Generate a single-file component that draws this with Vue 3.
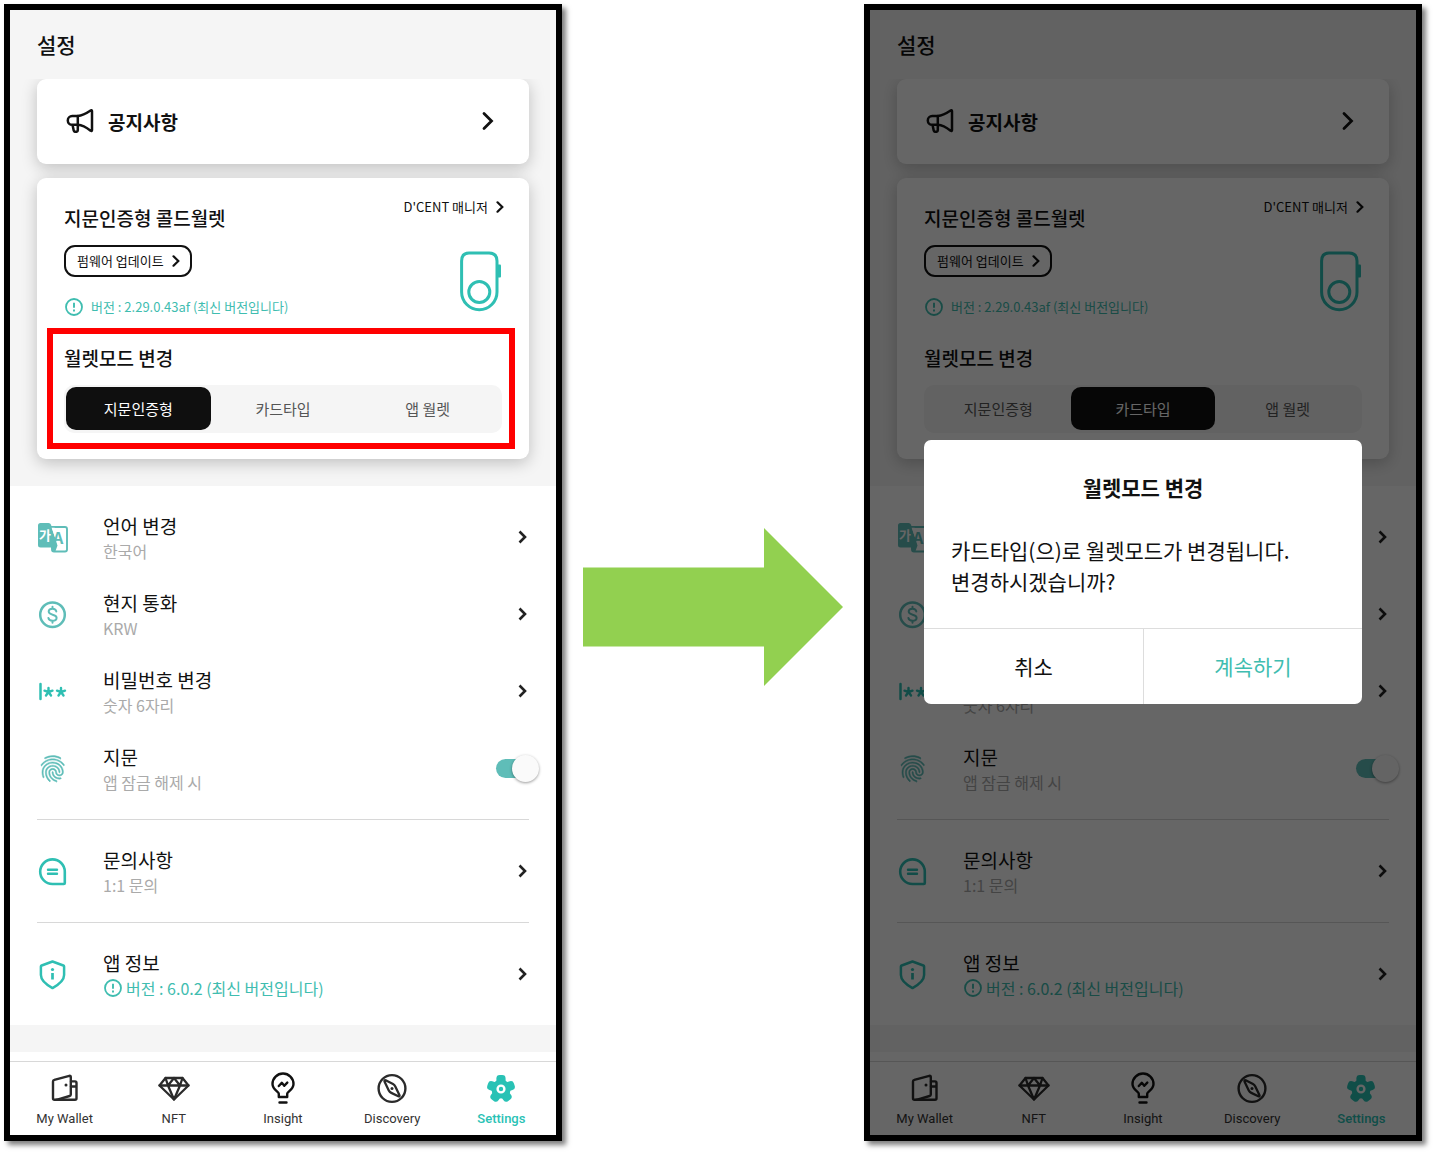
<script setup>
const phones = [
  { id: 'before', mode: 'finger', highlight: true, dialog: false },
  { id: 'after', mode: 'card', highlight: false, dialog: true },
]

const modes = [
  { id: 'finger', label: '지문인증형' },
  { id: 'card', label: '카드타입' },
  { id: 'app', label: '앱 월렛' },
]

const groups = [
  [
    { icon: 'language', title: '언어 변경', sub: '한국어' },
    { icon: 'currency', title: '현지 통화', sub: 'KRW' },
    { icon: 'password', title: '비밀번호 변경', sub: '숫자 6자리' },
    { icon: 'finger', title: '지문', sub: '앱 잠금 해제 시', toggle: true },
  ],
  [{ icon: 'chat', title: '문의사항', sub: '1:1 문의' }],
  [{ icon: 'shield', title: '앱 정보', sub: '버전 : 6.0.2 (최신 버전입니다)', version: true }],
]

const tabs = [
  { id: 'wallet', label: 'My Wallet' },
  { id: 'nft', label: 'NFT' },
  { id: 'insight', label: 'Insight' },
  { id: 'discovery', label: 'Discovery' },
  { id: 'settings', label: 'Settings' },
]

const gearTeeth = [0, 72, 144, 216, 288]

const fingerprint =
  'M17.81 4.47c-.08 0-.16-.02-.23-.06C15.66 3.42 14 3 12.01 3c-1.98 0-3.86.47-5.57 1.41-.24.13-.54.04-.68-.2-.13-.24-.04-.55.2-.68C7.82 2.52 9.86 2 12.01 2c2.13 0 3.99.47 6.03 1.52.25.13.34.43.21.67-.09.18-.26.28-.44.28zM3.5 9.72c-.1 0-.2-.03-.29-.09-.23-.16-.28-.47-.12-.7.99-1.4 2.25-2.5 3.75-3.27C9.98 4.04 14 4.03 17.15 5.65c1.5.77 2.76 1.86 3.75 3.25.16.22.11.54-.12.7-.23.16-.54.11-.7-.12-.9-1.26-2.04-2.25-3.39-2.94-2.87-1.47-6.54-1.47-9.4.01-1.36.7-2.5 1.7-3.4 2.96-.08.14-.23.21-.39.21zm6.25 12.07c-.13 0-.26-.05-.35-.15-.87-.87-1.34-1.43-2.01-2.64-.69-1.23-1.05-2.73-1.05-4.34 0-2.97 2.54-5.39 5.66-5.39s5.66 2.42 5.66 5.39c0 .28-.22.5-.5.5s-.5-.22-.5-.5c0-2.42-2.09-4.39-4.66-4.39-2.57 0-4.66 1.97-4.66 4.39 0 1.44.32 2.77.93 3.85.64 1.15 1.08 1.64 1.85 2.42.19.2.19.51 0 .71-.11.1-.24.15-.37.15zm7.17-1.85c-1.19 0-2.24-.3-3.1-.89-1.49-1.01-2.38-2.65-2.38-4.39 0-.28.22-.5.5-.5s.5.22.5.5c0 1.41.72 2.74 1.94 3.56.71.48 1.54.71 2.54.71.24 0 .64-.03 1.04-.1.27-.05.53.13.58.41.05.27-.13.53-.41.58-.57.11-1.07.12-1.21.12zM14.91 22c-.04 0-.09-.01-.13-.02-1.59-.44-2.63-1.03-3.72-2.1-1.4-1.39-2.17-3.24-2.17-5.22 0-1.62 1.38-2.94 3.08-2.94 1.7 0 3.08 1.32 3.08 2.94 0 1.07.93 1.94 2.08 1.94s2.08-.87 2.08-1.94c0-3.77-3.25-6.83-7.25-6.83-2.84 0-5.44 1.58-6.61 4.03-.39.81-.59 1.76-.59 2.8 0 .78.07 2.01.67 3.61.1.26-.03.55-.29.64-.26.1-.55-.04-.64-.29-.49-1.31-.73-2.61-.73-3.96 0-1.2.23-2.29.68-3.24 1.33-2.79 4.28-4.6 7.51-4.6 4.55 0 8.25 3.51 8.25 7.83 0 1.62-1.38 2.94-3.08 2.94s-3.08-1.32-3.08-2.94c0-1.07-.93-1.94-2.08-1.94s-2.08.87-2.08 1.94c0 1.71.66 3.31 1.87 4.51.95.94 1.86 1.46 3.27 1.85.27.07.42.35.35.61-.05.23-.26.38-.47.38z'
</script>

<template>
  <main class="stage">
    <template v-for="(phone, index) in phones" :key="phone.id">
      <svg v-if="index > 0" class="arrow" viewBox="0 0 260 158" aria-hidden="true">
        <path d="M0 39.5h181V0l79 79-79 79v-39.5H0z" fill="#92d050" />
      </svg>

      <section class="phone">
        <header class="topbar"><h1>설정</h1></header>

        <div class="cards">
          <a class="card notice" href="#notice">
            <svg class="horn" viewBox="0 0 28 24" fill="none" stroke="#111" stroke-width="2.5" stroke-linejoin="round" stroke-linecap="round">
              <path d="M11.8 7C17 6.6 21.5 3.6 24.6 1.5q1.4-.8 1.4.8v18.6q0 1.500-1.400.8C21.5 19.3 17 16.2 11.800 15.800" />
              <path d="M11.800 7H6.200a4.400 4.400 0 0 0 0 8.800h5.600zM6.500 15.800l1.200 5.700q.3 1.300 1.600 1.300h.9q1.600 0 1.600-1.500V15.800" />
            </svg>
            <span>공지사항</span>
            <svg class="chev-lg" viewBox="0 0 12 20" fill="none" stroke="#111" stroke-width="2.8" stroke-linecap="round"><path d="M2 2.500l7.500 7.500L2 17.500" /></svg>
          </a>

          <div class="card wallet">
            <div class="device">
              <div class="device-info">
                <h2>지문인증형 콜드월렛</h2>
                <button type="button" class="firmware">
                  펌웨어 업데이트
                  <svg class="chev-sm" viewBox="0 0 8 12" fill="none" stroke="#111" stroke-width="2.2" stroke-linecap="round"><path d="M1.500 1.300L6.300 6l-4.800 4.700" /></svg>
                </button>
                <p class="version">
                  <svg class="alert" viewBox="0 0 18 18" fill="none" stroke="currentColor"><circle cx="9" cy="9" r="8" stroke-width="1.8" /><path d="M9 4.700v5M9 11.600v1.800" stroke-width="1.9" /></svg>
                  버전 : 2.29.0.43af (최신 버전입니다)
                </p>
              </div>
              <div class="device-side">
                <a class="manager" href="#manager">
                  D'CENT 매니저
                  <svg class="chev-sm" viewBox="0 0 8 12" fill="none" stroke="#111" stroke-width="2.2" stroke-linecap="round"><path d="M1.500 1.300L6.300 6l-4.800 4.700" /></svg>
                </a>
                <svg class="wallet-art" viewBox="0 0 41 61" fill="none" stroke="#2fbfb3" stroke-width="3">
                  <path d="M9 2h20q8 0 8 8v31a17.700 17.700 0 0 1-35.400 0V10Q1.600 2 9 2z" />
                  <circle cx="19.3" cy="41" r="10.5" />
                  <path d="M37 13.500h3q1 0 1 1v11q0 1-1 1h-3z" fill="#2fbfb3" stroke="none" />
                </svg>
              </div>
            </div>

            <div class="mode" :class="{ highlight: phone.highlight }">
              <h2>월렛모드 변경</h2>
              <div class="segments">
                <button
                  v-for="mode in modes"
                  :key="mode.id"
                  type="button"
                  :class="{ active: mode.id === phone.mode }"
                  :aria-pressed="mode.id === phone.mode"
                >{{ mode.label }}</button>
              </div>
            </div>
          </div>
        </div>

        <div class="list">
          <div v-for="(group, g) in groups" :key="g" class="group">
            <component
              :is="row.toggle ? 'label' : 'a'"
              v-for="row in group"
              :key="row.icon"
              class="row"
              :href="row.toggle ? undefined : '#' + row.icon"
            >
              <svg class="row-icon" viewBox="0 0 32 32" fill="none" stroke="#2fbfb3" stroke-linecap="round" stroke-linejoin="round">
                <g v-if="row.icon === 'language'" stroke="none">
                  <path d="M14 5h14a2 2 0 0 1 2 2v20.500a2 2 0 0 1-2 2H17a2 2 0 0 1-2-2v-3" fill="#fff" stroke="#5fbdb8" stroke-width="1.9" />
                  <path d="M3.500 1H11.500q2 0 2.500 1.800L20.500 23.500l-2 5.500h-2l-2.500-3.500H3.500Q1 25.500 1 23V3.500Q1 1 3.500 1z" fill="#5fbdb8" />
                  <path d="M14.600 5.800h3l4.500 14.500-1.500 2.500z" fill="#fff" />
                  <text x="2" y="18" class="glyph" font-size="13" fill="#fff">가</text>
                  <text x="16" y="22" class="glyph" font-size="16" fill="#5fbdb8">A</text>
                </g>
                <g v-else-if="row.icon === 'currency'" stroke="#5fbdb8">
                  <circle cx="15.5" cy="15.7" r="12.3" stroke-width="2.5" />
                  <path d="M19.300 12.400c-.3-1.700-1.800-2.700-3.800-2.700-2.200 0-3.800 1.100-3.800 2.900 0 4.200 7.900 2 7.900 6.200 0 1.800-1.700 3-4 3s-3.900-1.100-4.200-2.900M15.500 7.800v2M15.500 21.700v2" stroke-width="2" />
                </g>
                <g v-else-if="row.icon === 'password'">
                  <path d="M3.500 8v15" stroke-width="2.5" />
                  <path d="M11.500 16v-4M11.500 16l-4-1.300M11.500 16l4-1.300M11.500 16l-2.500 3.500M11.500 16l2.500 3.500M24 16v-4M24 16l-4-1.300M24 16l4-1.300M24 16l-2.500 3.500M24 16l2.500 3.500" stroke-width="2.4" />
                </g>
                <path v-else-if="row.icon === 'finger'" :d="fingerprint" transform="scale(1.31)" fill="#5fbdb8" stroke="#5fbdb8" stroke-width="0.35" />
                <g v-else-if="row.icon === 'chat'">
                  <path d="M15.500 3.400a12.300 12.300 0 0 0 0 24.600H26.800q1 0 1-1V15.700A12.300 12.300 0 0 0 15.500 3.400z" stroke-width="2.6" />
                  <path d="M11 13.800h9M11 17.800h9" stroke-width="2.4" />
                </g>
                <g v-else>
                  <path d="M15.500 2.500l10.800 4q.8.300.8 1.100v8.500c0 6-6 10-11.600 13-5.600-3-11.600-7-11.600-13V7.600q0-.8.800-1.100z" stroke-width="2.5" />
                  <path d="M15.500 14v6.500" stroke-width="2.7" stroke-linecap="butt" /><circle cx="15.5" cy="10.5" r="1.6" fill="#2fbfb3" stroke="none" />
                </g>
              </svg>
              <span class="row-text">
                <span class="row-title">{{ row.title }}</span>
                <span class="row-sub" :class="{ teal: row.version }">
                  <svg v-if="row.version" class="alert" viewBox="0 0 18 18" fill="none" stroke="currentColor"><circle cx="9" cy="9" r="8" stroke-width="1.8" /><path d="M9 4.700v5M9 11.600v1.800" stroke-width="1.9" /></svg>
                  {{ row.sub }}
                </span>
              </span>
              <input v-if="row.toggle" type="checkbox" class="switch" checked />
              <svg v-else class="chev-row" viewBox="0 0 9 14" fill="none" stroke="#222" stroke-width="2.6"><path d="M1.500 1.500L7 7l-5.500 5.500" /></svg>
            </component>
          </div>
        </div>
        <div class="band"></div>

        <nav class="tabs">
          <a v-for="tab in tabs" :key="tab.id" :href="'#' + tab.id" :class="{ current: tab.id === 'settings' }">
            <svg viewBox="0 0 34 34" fill="none" stroke="#2b2b2b" stroke-width="2.4" stroke-linejoin="round" stroke-linecap="round">
              <g v-if="tab.id === 'wallet'">
                <path d="M5 10.500q0-1.300 1.300-1.600l15-4q1.500-.4 1.500 1.100v17.500q0 1.200-1.200 1.500L8.500 28.800H6.500q-1.500 0-1.500-1.500z" />
                <path d="M8.500 28.800h18.500q1.500 0 1.500-1.500V11.900q0-1.500-1.500-1.500h-4M23 15.500H28" />
                <circle cx="18" cy="14" r="1.5" fill="#2b2b2b" stroke="none" />
              </g>
              <g v-else-if="tab.id === 'nft'" stroke-width="2.3">
                <path d="M8.500 7h17l6 7.500-14.500 14L2.500 14.500z" />
                <path d="M2.500 14.500H31.500M11 14.500L17 28.500l6-14M8.500 7l2.500 7.500 6-7.500 6 7.500 2.500-7.500" />
              </g>
              <g v-else-if="tab.id === 'insight'" stroke="#111">
                <path d="M12.800 26v-3.300c0-1.800-6.300-4-6.300-9.700a10.500 10.500 0 0 1 21 0c0 5.700-6.300 7.900-6.300 9.700v3.300zM13.500 31.500h7" />
                <path d="M12.800 15l3-3.200 2.500 3 3-3.200" />
              </g>
              <g v-else-if="tab.id === 'discovery'">
                <circle cx="17" cy="17.5" r="13.4" />
                <path d="M9.500 10.500q-.4-1.700 1.200-1.200l7.300 3.700q1.500.8 2.300 2.400l4.200 8.800q.5 1.600-1.200 1l-7-3.300q-1.700-.8-2.500-2.400z" stroke-width="2.3" />
                <circle cx="17" cy="17.5" r="1.5" fill="#2b2b2b" stroke="none" />
              </g>
              <g v-else stroke="none" fill="#29c2b5">
                <circle cx="17" cy="18" r="9.6" />
                <rect
                  v-for="angle in gearTeeth"
                  :key="angle"
                  x="12.4"
                  y="4"
                  width="9.2"
                  height="12"
                  rx="3.4"
                  :transform="`rotate(${angle} 17 18)`"
                />
                <circle cx="17" cy="18" r="3.4" stroke="#fff" stroke-width="2.4" />
              </g>
            </svg>
            {{ tab.label }}
          </a>
        </nav>

        <div v-if="phone.dialog" class="overlay">
          <div class="dialog" role="dialog" aria-labelledby="dialog-title">
            <h2 id="dialog-title">월렛모드 변경</h2>
            <p>카드타입(으)로 월렛모드가 변경됩니다.<br />변경하시겠습니까?</p>
            <div class="actions">
              <button type="button">취소</button>
              <button type="button" class="confirm">계속하기</button>
            </div>
          </div>
        </div>
      </section>
    </template>
  </main>
</template>

<style>
body {
  margin: 0;
  background: #fff;
}
</style>

<style scoped>
.stage {
  display: grid;
  grid-template-columns: minmax(0, 1fr) 302px minmax(0, 1fr);
  align-items: start;
  padding: 4px 13px 13px 4px;
  font-family: "Noto Sans CJK KR", "Noto Sans", sans-serif;
  color: #111;
}
.stage * {
  box-sizing: border-box;
}
h1, h2, p {
  margin: 0;
  font-weight: 500;
}
a {
  color: inherit;
  text-decoration: none;
}
button {
  font: inherit;
  color: inherit;
  margin: 0;
  padding: 0;
  border: 0;
  background: none;
}
svg {
  display: block;
  flex: none;
}
.arrow {
  width: 260px;
  height: 158px;
  align-self: center;
  justify-self: center;
  margin-top: 69px;
}
.phone {
  position: relative;
  border: 6px solid #000;
  background: #fff;
  box-shadow: 4px 4px 5px rgba(0, 0, 0, 0.5);
}
.topbar {
  padding: 19px 27px;
  background: #f5f5f5;
}
.topbar h1 {
  font-size: 21px;
  line-height: 31px;
}
.cards {
  display: flex;
  flex-direction: column;
  gap: 14px;
  padding: 0 27px 27px;
  background: #f5f5f5;
  overflow: hidden;
}
.card {
  background: #fff;
  border-radius: 9px;
  box-shadow: 0 4px 16px rgba(0, 0, 0, 0.22);
}
.notice {
  display: flex;
  align-items: center;
  height: 85px;
  padding: 0 35px 1px 29px;
  font-size: 19px;
  font-weight: 700;
}
.notice span {
  flex: 1;
  margin-left: 14px;
}
.horn {
  width: 28px;
  height: 24px;
}
.chev-lg {
  width: 12px;
  height: 20px;
}
.wallet {
  position: relative;
  padding: 0 27px 26px;
}
.wallet h2 {
  font-size: 19px;
  line-height: 28px;
}
.device {
  display: flex;
  justify-content: space-between;
}
.device-info {
  padding-top: 26px;
}
.firmware {
  display: flex;
  align-items: center;
  gap: 8px;
  height: 32px;
  margin-top: 13px;
  padding: 0 10px 1px 11px;
  border: 2px solid #111;
  border-radius: 11px;
  font-size: 13px;
}
.chev-sm {
  width: 8px;
  height: 12px;
}
.version {
  display: flex;
  align-items: center;
  gap: 8px;
  margin-top: 18px;
  padding-left: 1px;
  font-size: 13px;
  line-height: 24px;
  font-weight: 400;
  color: #3fbdb0;
}
.alert {
  width: 18px;
  height: 18px;
}
.device-side {
  display: flex;
  flex-direction: column;
  align-items: flex-end;
  margin-right: -2px;
  padding-top: 19px;
}
.manager {
  display: flex;
  align-items: center;
  gap: 8px;
  font-size: 13px;
  line-height: 20px;
}
.wallet-art {
  width: 41px;
  height: 61px;
  margin: 34px 3px 0 0;
}
.mode {
  position: relative;
  margin-top: 25px;
}
.mode.highlight::after {
  content: "";
  position: absolute;
  inset: -16px -13px -16px -17px;
  border: 6px solid #f00;
  pointer-events: none;
}
.segments {
  display: grid;
  grid-template-columns: repeat(3, 1fr);
  margin-top: 13px;
  padding: 2px 2px 3px;
  height: 48px;
  border-radius: 10px;
  background: #f5f5f5;
  font-size: 15px;
  color: #555;
}
.segments button {
  padding-bottom: 1px;
}
.segments .active {
  border-radius: 10px;
  background: #0f0f0f;
  color: #fff;
}
.group {
  position: relative;
  padding: 13px 27px 12px;
}
.group + .group {
  padding-top: 14px;
}
.group + .group::before {
  content: "";
  position: absolute;
  top: 0;
  left: 27px;
  right: 27px;
  height: 1px;
  background: #d8d8d8;
}
.row {
  display: flex;
  align-items: center;
  height: 77px;
}
.row-icon {
  width: 32px;
  height: 32px;
}
.glyph {
  font-weight: 700;
}
.row-text {
  display: flex;
  flex-direction: column;
  flex: 1;
  margin-left: 34px;
  padding-top: 1px;
}
.row-title {
  font-size: 19px;
  line-height: 26px;
}
.row-sub {
  display: flex;
  align-items: center;
  gap: 4px;
  font-size: 16px;
  line-height: 25px;
  color: #aaa;
}
.row-sub.teal {
  padding-left: 1px;
  color: #3fbdb0;
}
.chev-row {
  width: 9px;
  height: 14px;
  margin: 0 2px 2px 0;
}
.switch {
  appearance: none;
  display: flex;
  align-items: center;
  justify-content: flex-end;
  width: 43px;
  height: 19px;
  margin: 0 -10px 1px 0;
  border-radius: 10px;
  background: linear-gradient(to right, #5fbdb8 34px, transparent 34px);
}
.switch::before {
  content: "";
  width: 27px;
  height: 27px;
  flex: none;
  border-radius: 50%;
  background: #fafafa;
  box-shadow: 0 1px 3px rgba(0, 0, 0, 0.4);
}
.band {
  height: 27px;
  background: #f5f5f5;
}
.tabs {
  display: grid;
  grid-template-columns: repeat(5, 1fr);
  margin-top: 9px;
  border-top: 1px solid #d8d8d8;
  padding: 9px 0 6px;
  font: 13px/20px Roboto, sans-serif;
  color: #333;
}
.tabs a {
  display: flex;
  flex-direction: column;
  align-items: center;
  gap: 4px;
}
.tabs svg {
  width: 34px;
  height: 34px;
}
.tabs .current {
  color: #29c2b5;
  font-weight: 500;
}
.overlay {
  position: absolute;
  inset: 0;
  display: flex;
  align-items: center;
  padding: 0 54px 2px;
  background: rgba(0, 0, 0, 0.6);
}
.dialog {
  flex: 1;
  padding-top: 32px;
  border-radius: 7px;
  background: #fff;
  overflow: hidden;
  font-size: 21px;
  line-height: 31px;
}
.dialog h2 {
  font-size: 21px;
  font-weight: 700;
  text-align: center;
}
.dialog p {
  margin: 32px 27px 31px;
  font-weight: 400;
}
.actions {
  display: grid;
  grid-template-columns: 1fr 1fr;
  border-top: 1px solid #ddd;
}
.actions button {
  height: 75px;
}
.actions .confirm {
  border-left: 1px solid #ddd;
  color: #3fbdb0;
}
</style>
